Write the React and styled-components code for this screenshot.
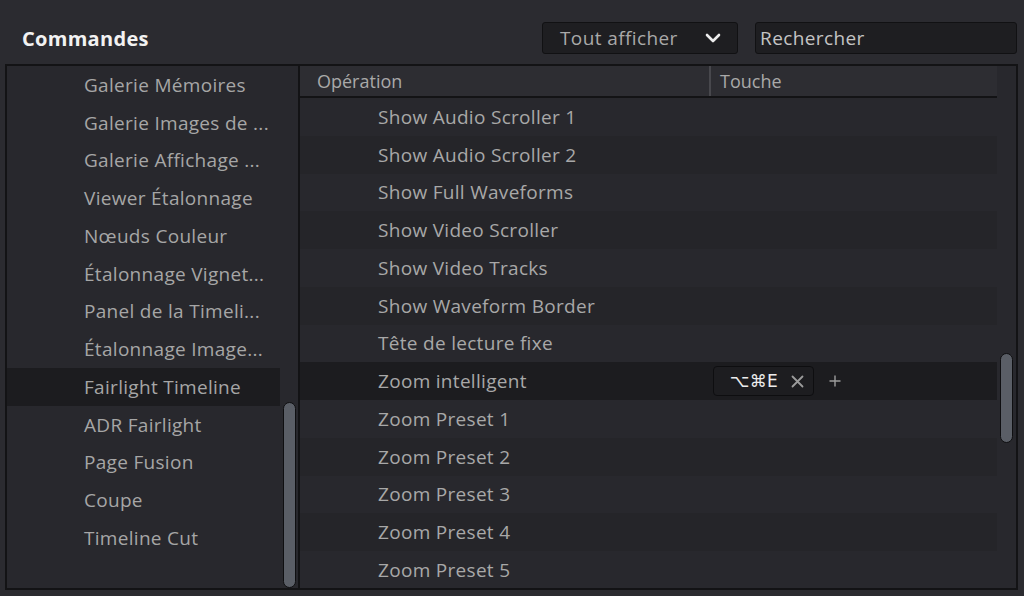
import React from "react";
import styled, { createGlobalStyle } from "styled-components";

const Global = createGlobalStyle`
  html, body { margin: 0; padding: 0; background: #2b2b30; }
  body { font-family: "Open Sans", "DejaVu Sans", sans-serif; -webkit-font-smoothing: antialiased; }
  * { box-sizing: border-box; }
`;

const Page = styled.div`
  width: 1024px;
  height: 596px;
  display: flex;
  flex-direction: column;
  padding: 0 6px 6px 5px;
  background: #2b2b30;
  overflow: hidden;
`;

const TopBar = styled.div`
  height: 64px;
  padding: 12px 1px 0 0;
  display: flex;
  align-items: center;
`;

const Title = styled.h1`
  margin: 0 0 0 17px;
  font-size: 20px;
  font-weight: 700;
  color: #f2f2f2;
  letter-spacing: 0.3px;
`;

const Select = styled.div`
  margin-left: auto;
  width: 196px;
  height: 32px;
  background: #1e1e21;
  border: 1px solid #111113;
  border-radius: 3px;
  display: flex;
  align-items: center;
  justify-content: space-between;
  padding: 0 16px 0 17px;
  color: #a9a9a9;
  font-size: 19px;
  letter-spacing: 0.4px;
`;

const Search = styled.div`
  margin-left: 17px;
  width: 262px;
  height: 32px;
  background: #1e1e21;
  border: 1px solid #111113;
  border-radius: 3px;
  display: flex;
  align-items: center;
  padding-left: 4px;
  color: #c4c4c4;
  font-size: 19px;
  letter-spacing: 0.4px;
`;

const Frame = styled.div`
  flex: 1;
  border: 2px solid #131315;
  display: flex;
  min-height: 0;
  background: #28282d;
`;

const Side = styled.div`
  width: 293px;
  border-right: 2px solid #131315;
  display: flex;
  min-height: 0;
`;

const SideList = styled.div`
  width: 273px;
  display: flex;
  flex-direction: column;
`;

const SideItem = styled.div`
  height: 37.75px;
  flex-shrink: 0;
  display: flex;
  align-items: center;
  padding-left: 77px;
  font-size: 19px;
  letter-spacing: 0.3px;
  color: #a6a6a6;
  white-space: nowrap;
  background: ${(p) => (p.$active ? "#1c1c1f" : "transparent")};
`;

const Track = styled.div`
  flex: 1;
  display: flex;
  flex-direction: column;
  padding-left: ${(p) => p.$inset}px;
`;

const Thumb = styled.div`
  width: ${(p) => p.$w}px;
  background: #5a5e66;
  border: 1px solid #0f0f11;
  border-radius: 7px;
`;

const Main = styled.div`
  flex: 1;
  display: flex;
  min-width: 0;
`;

const Table = styled.div`
  width: 697px;
  display: flex;
  flex-direction: column;
  overflow: hidden;
`;

const Head = styled.div`
  height: 32px;
  flex-shrink: 0;
  display: grid;
  grid-template-columns: 411px 1fr;
  background: #2d2d32;
  border-bottom: 2px solid #131315;
`;

const HeadCell = styled.div`
  display: flex;
  align-items: center;
  padding-left: ${(p) => p.$pad}px;
  font-size: 18px;
  color: #a9a9a9;
  border-right: ${(p) => (p.$divider ? "2px solid #48484d" : "none")};
`;

const Row = styled.div`
  height: 37.75px;
  flex-shrink: 0;
  display: grid;
  grid-template-columns: 413px 1fr;
  align-items: center;
  background: ${(p) => (p.$active ? "#1c1c1f" : p.$alt ? "#252529" : "transparent")};
`;

const OpCell = styled.div`
  padding-left: 78px;
  font-size: 19px;
  letter-spacing: 0.3px;
  color: #a8a8a8;
  white-space: nowrap;
`;

const KeyCell = styled.div`
  display: flex;
  align-items: center;
`;

const KeyBadge = styled.div`
  width: 101px;
  height: 30px;
  background: #1d1d20;
  border: 1px solid #0e0e10;
  border-radius: 4px;
  display: flex;
  align-items: center;
  padding-left: 16px;
  gap: 13px;
`;

const KeyText = styled.span`
  font-family: "DejaVu Sans", "Open Sans", sans-serif;
  font-size: 17px;
  color: #ececec;
  letter-spacing: 0.2px;
`;

const IconWrap = styled.span`
  display: flex;
  align-items: center;
  margin-left: ${(p) => p.$ml || 0}px;
`;

const sideItems = [
  "Galerie Mémoires",
  "Galerie Images de ...",
  "Galerie Affichage ...",
  "Viewer Étalonnage",
  "Nœuds Couleur",
  "Étalonnage Vignet...",
  "Panel de la Timeli...",
  "Étalonnage Image...",
  "Fairlight Timeline",
  "ADR Fairlight",
  "Page Fusion",
  "Coupe",
  "Timeline Cut",
];

const ops = [
  "Show Audio Scroller 1",
  "Show Audio Scroller 2",
  "Show Full Waveforms",
  "Show Video Scroller",
  "Show Video Tracks",
  "Show Waveform Border",
  "Tête de lecture fixe",
  "Zoom intelligent",
  "Zoom Preset 1",
  "Zoom Preset 2",
  "Zoom Preset 3",
  "Zoom Preset 4",
  "Zoom Preset 5",
];

const Chevron = () => (
  <svg width="16" height="10" viewBox="0 0 16 10">
    <polyline points="2,2 8,8 14,2" fill="none" stroke="#ededed" strokeWidth="2.6" strokeLinecap="round" strokeLinejoin="round" />
  </svg>
);

const Cross = () => (
  <svg width="13" height="13" viewBox="0 0 13 13">
    <path d="M1.5 1.5 L11.5 11.5 M11.5 1.5 L1.5 11.5" stroke="#9c9c9c" strokeWidth="1.8" strokeLinecap="round" />
  </svg>
);

const Plus = () => (
  <svg width="12" height="12" viewBox="0 0 12 12">
    <path d="M6 0.5 V11.5 M0.5 6 H11.5" stroke="#9c9c9c" strokeWidth="1.4" />
  </svg>
);

export default function App() {
  return (
    <Page>
      <Global />
      <TopBar>
        <Title>Commandes</Title>
        <Select>
          <span>Tout afficher</span>
          <Chevron />
        </Select>
        <Search>Rechercher</Search>
      </TopBar>
      <Frame>
        <Side>
          <SideList>
            {sideItems.map((s, i) => (
              <SideItem key={s} $active={i === 8}>{s}</SideItem>
            ))}
          </SideList>
          <Track $inset={3}>
            <Thumb $w={13} style={{ marginTop: 336, height: 186 }} />
          </Track>
        </Side>
        <Main>
          <Table>
            <Head>
              <HeadCell $pad={17} $divider>Opération</HeadCell>
              <HeadCell $pad={9}>Touche</HeadCell>
            </Head>
            {ops.map((o, i) => (
              <Row key={o} $alt={i % 2 === 1} $active={i === 7}>
                <OpCell>{o}</OpCell>
                <KeyCell>
                  {i === 7 && (
                    <>
                      <KeyBadge>
                        <KeyText>⌥⌘E</KeyText>
                        <IconWrap><Cross /></IconWrap>
                      </KeyBadge>
                      <IconWrap $ml={15}><Plus /></IconWrap>
                    </>
                  )}
                </KeyCell>
              </Row>
            ))}
          </Table>
          <Track $inset={3}>
            <Thumb $w={13} style={{ marginTop: 287, height: 90 }} />
          </Track>
        </Main>
      </Frame>
    </Page>
  );
}
